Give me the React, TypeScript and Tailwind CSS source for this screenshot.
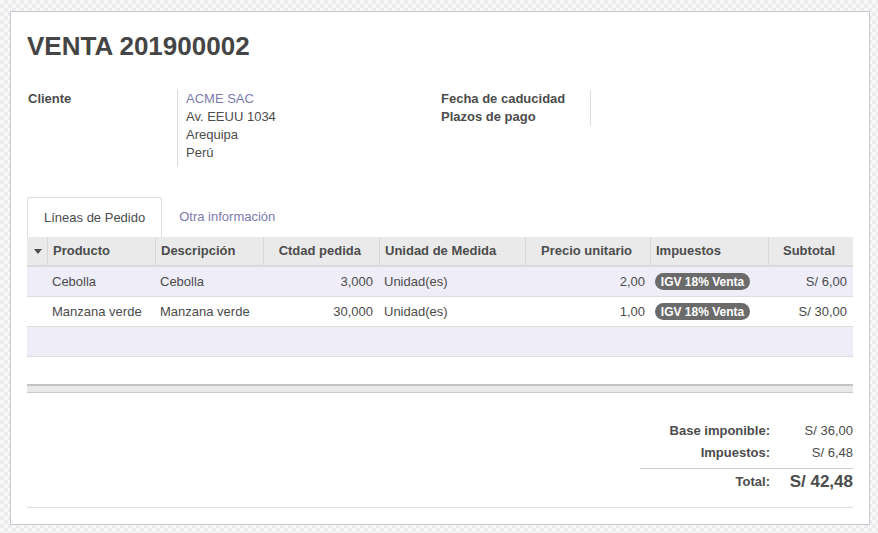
import React from "react";

interface Column {
  label: string;
  width: string;
  align: "left" | "right";
}

const columns: Column[] = [
  { label: "Producto", width: "w-[108px]", align: "left" },
  { label: "Descripción", width: "w-[108px]", align: "left" },
  { label: "Ctdad pedida", width: "w-[116px]", align: "right" },
  { label: "Unidad de Medida", width: "w-[146px]", align: "left" },
  { label: "Precio unitario", width: "w-[125px]", align: "right" },
  { label: "Impuestos", width: "w-[118px]", align: "left" },
  { label: "Subtotal", width: "w-[85px]", align: "right" },
];

const lines = [
  { product: "Cebolla", desc: "Cebolla", qty: "3,000", uom: "Unidad(es)", price: "2,00", tax: "IGV 18% Venta", subtotal: "S/ 6,00" },
  { product: "Manzana verde", desc: "Manzana verde", qty: "30,000", uom: "Unidad(es)", price: "1,00", tax: "IGV 18% Venta", subtotal: "S/ 30,00" },
];

const Badge: React.FC<{ text: string }> = ({ text }) => (
  <span className="inline-flex items-center justify-center w-[95px] h-[17px] rounded-full bg-[#6b6b6b] text-white text-[12px] font-bold leading-none">
    {text}
  </span>
);

const App: React.FC = () => {
  return (
    <div className="w-full h-[533px] pt-[11px] pl-[10px] bg-[#f5f5f5] bg-[image:repeating-conic-gradient(#ececec_0%_25%,#f9f9f9_0%_50%)] bg-[length:8px_8px] font-['Liberation_Sans',Arial,sans-serif] text-[13px] text-[#4c4c4c]">
      <div className="w-[860px] h-[514px] bg-white border border-[#c9c7d3] px-[16px] pt-[19px]">
        {/* title */}
        <h1 className="text-[26px] leading-[30px] font-bold text-[#454545]">VENTA 201900002</h1>

        {/* fields */}
        <div className="flex mt-[29px] leading-[18px]">
          <div className="w-[413px] flex">
            <div className="w-[150px] font-bold pl-px">Cliente</div>
            <div className="border-l border-[#dcdcdc] pl-[8px] pb-[5px] -mt-px pt-px">
              <div className="text-[#7c7bad]">ACME SAC</div>
              <div>Av. EEUU 1034</div>
              <div>Arequipa</div>
              <div>Perú</div>
            </div>
          </div>
          <div className="flex self-start">
            <div className="w-[150px] font-bold pl-px">
              <div>Fecha de caducidad</div>
              <div>Plazos de pago</div>
            </div>
            <div className="border-l border-[#dcdcdc] h-[36px]" />
          </div>
        </div>

        {/* tabs */}
        <div className="flex mt-[30px] h-[40px]">
          <div className="px-4 flex items-center border border-b-0 border-[#dddddd] rounded-t-[3px] bg-white">
            Líneas de Pedido
          </div>
          <div className="ml-px px-4 flex items-center text-[#7c7bad]">Otra información</div>
        </div>

        {/* table */}
        <div>
          <div className="flex h-[30px] bg-[#eaeaea] border-b-2 border-[#dadada] font-bold">
            <div className="w-[20px] flex items-center justify-center pl-[2px]">
              <svg width="8" height="5" viewBox="0 0 8 5">
                <polygon points="0,0 8,0 4,5" fill="#4c4c4c" />
              </svg>
            </div>
            {columns.map((c) => (
              <div
                key={c.label}
                className={`${c.width} flex items-center border-l border-[#d6d6d6] ${
                  c.align === "right" ? "justify-end pr-[18px]" : "pl-[5px]"
                }`}
              >
                {c.label}
              </div>
            ))}
          </div>

          {lines.map((l, i) => (
            <div
              key={l.product}
              className={`flex h-[30px] items-center border-b border-[#dddddd] ${i % 2 === 0 ? "bg-[#eeedf8]" : "bg-white"}`}
            >
              <div className="w-[20px]" />
              <div className="w-[108px] pl-[5px]">{l.product}</div>
              <div className="w-[108px] pl-[5px]">{l.desc}</div>
              <div className="w-[116px] text-right pr-[6px]">{l.qty}</div>
              <div className="w-[146px] pl-[5px]">{l.uom}</div>
              <div className="w-[125px] text-right pr-[5px]">{l.price}</div>
              <div className="w-[118px] pl-[5px]">
                <Badge text={l.tax} />
              </div>
              <div className="w-[85px] text-right pr-[6px]">{l.subtotal}</div>
            </div>
          ))}
          <div className="h-[30px] bg-[#eeedf8] border-b border-[#dddddd]" />
          <div className="h-[27px]" />
          <div className="h-[9px] bg-[#e9e9e9] border-t-2 border-b border-t-[#c2c2c2] border-b-[#c9c9c9]" />
        </div>

        {/* totals */}
        <div className="flex justify-end mt-[27px]">
          <div className="w-[213px]">
            <div className="flex h-[22px] items-center">
              <div className="flex-1 text-right font-bold">Base imponible:</div>
              <div className="w-[83px] text-right">S/ 36,00</div>
            </div>
            <div className="flex h-[22px] items-center">
              <div className="flex-1 text-right font-bold">Impuestos:</div>
              <div className="w-[83px] text-right">S/ 6,48</div>
            </div>
            <div className="flex h-[25px] items-center pt-px mt-[4px] border-t border-[#cccccc]">
              <div className="flex-1 text-right font-bold">Total:</div>
              <div className="w-[83px] text-right font-bold text-[17px]">S/ 42,48</div>
            </div>
          </div>
        </div>
        <div className="mt-[14px] border-t border-[#dddddd]" />
      </div>
    </div>
  );
};

export default App;
